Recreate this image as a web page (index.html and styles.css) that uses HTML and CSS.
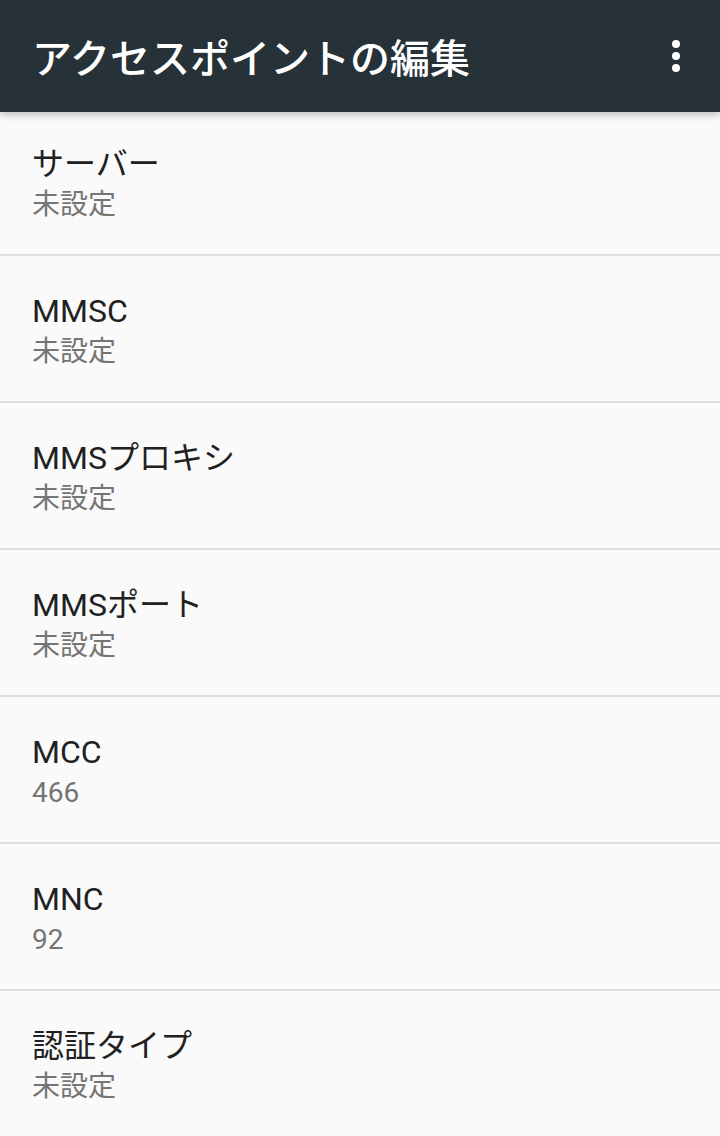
FILE: index.html
```html
<!DOCTYPE html>
<html lang="ja">
<head>
    <meta charset="UTF-8">
    <meta name="viewport" content="width=device-width, initial-scale=1.0">
    <title>アクセスポイントの編集</title>
    <link rel="stylesheet" href="styles.css">
</head>
<body>

<header class="toolbar">
    <h1 class="toolbar-title">アクセスポイントの編集</h1>
    <button class="overflow" aria-label="その他のオプション">
        <svg width="48" height="48" viewBox="0 0 48 48">
            <circle cx="24" cy="12" r="4" fill="#fff"/>
            <circle cx="24" cy="24" r="4" fill="#fff"/>
            <circle cx="24" cy="36" r="4" fill="#fff"/>
        </svg>
    </button>
</header>

<ul class="prefs">
    <li class="pref">
        <div class="pref-title">サーバー</div>
        <div class="pref-summary">未設定</div>
    </li>
    <li class="pref">
        <div class="pref-title">MMSC</div>
        <div class="pref-summary">未設定</div>
    </li>
    <li class="pref">
        <div class="pref-title">MMSプロキシ</div>
        <div class="pref-summary">未設定</div>
    </li>
    <li class="pref">
        <div class="pref-title">MMSポート</div>
        <div class="pref-summary">未設定</div>
    </li>
    <li class="pref">
        <div class="pref-title">MCC</div>
        <div class="pref-summary">466</div>
    </li>
    <li class="pref">
        <div class="pref-title">MNC</div>
        <div class="pref-summary">92</div>
    </li>
    <li class="pref">
        <div class="pref-title">認証タイプ</div>
        <div class="pref-summary">未設定</div>
    </li>
</ul>

</body>
</html>
```

FILE: styles.css
```css
/* Reset and basic styles */
* {
    box-sizing: border-box;
    margin: 0;
    padding: 0;
}

body {
    font-family: Roboto, "Noto Sans CJK JP", sans-serif;
    background-color: #fafafa;
    height: 1136px;
    overflow: hidden;
}

/* Toolbar */
.toolbar {
    position: relative;
    z-index: 1;
    height: 112px;
    display: flex;
    align-items: center;
    justify-content: space-between;
    padding: 0 20px 0 32px;
    background-color: #263238;
    box-shadow: 0 2px 8px rgba(0, 0, 0, 0.28);
}

.toolbar-title {
    font-family: "Noto Sans CJK JP", sans-serif;
    font-size: 40px;
    font-weight: 500;
    line-height: 48px;
    color: #fff;
}

.overflow {
    width: 48px;
    height: 48px;
    border: none;
    background: none;
    display: flex;
}

/* Preference list */
.prefs {
    list-style: none;
    margin-top: -3px;
}

.pref {
    height: 147px;
    padding: 35px 32px 0;
    border-bottom: 2px solid #dedede;
}

.pref-title {
    font-size: 32px;
    line-height: 40px;
    color: #212121;
}

.pref-summary {
    margin-top: 3px;
    font-size: 28px;
    line-height: 36px;
    color: #757575;
}
```
